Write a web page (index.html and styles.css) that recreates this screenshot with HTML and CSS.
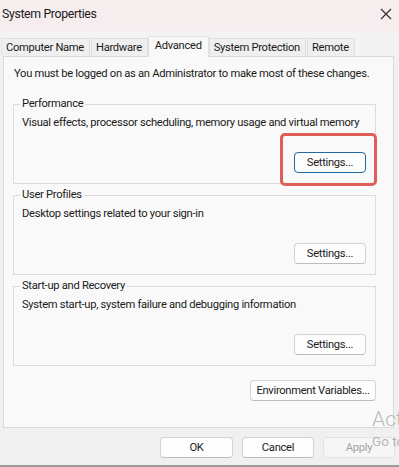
FILE: index.html
```html
<!DOCTYPE html>
<html>
<head>
<meta charset="utf-8">
<link rel="stylesheet" href="styles.css">
</head>
<body>
<div class="window">
  <div class="titlebar">
    <span class="title">System Properties</span>
    <svg class="close" width="12" height="12" viewBox="0 0 12 12"><path d="M1 1 L11 11 M11 1 L1 11" stroke="#2b2b2b" stroke-width="1.1" fill="none"/></svg>
  </div>
  <div class="tabs">
    <div class="tab">Computer Name</div>
    <div class="tab">Hardware</div>
    <div class="tab active">Advanced</div>
    <div class="tab">System Protection</div>
    <div class="tab">Remote</div>
  </div>
  <div class="panel">
    <p class="note">You must be logged on as an Administrator to make most of these changes.</p>
    <fieldset class="group">
      <legend>Performance</legend>
      <p class="desc">Visual effects, processor scheduling, memory usage and virtual memory</p>
      <div class="actions">
        <span class="btn-wrap"><button class="btn focus">Settings...</button><span class="highlight"></span></span>
      </div>
    </fieldset>
    <fieldset class="group">
      <legend>User Profiles</legend>
      <p class="desc">Desktop settings related to your sign-in</p>
      <div class="actions"><button class="btn">Settings...</button></div>
    </fieldset>
    <fieldset class="group">
      <legend>Start-up and Recovery</legend>
      <p class="desc">System start-up, system failure and debugging information</p>
      <div class="actions"><button class="btn">Settings...</button></div>
    </fieldset>
    <div class="env-row"><button class="btn env">Environment Variables...</button></div>
  </div>
  <div class="footer">
    <button class="btn">OK</button>
    <button class="btn">Cancel</button>
    <button class="btn disabled">Apply</button>
  </div>
  <div class="watermark">
    <div class="wm-big">Activate Windows</div>
    <div class="wm-small">Go to Settings to activate Windows.</div>
  </div>
</div>
</body>
</html>
```
FILE: styles.css
```css
* { box-sizing: border-box; }
html, body { margin: 0; padding: 0; }
body {
  width: 399px;
  height: 467px;
  overflow: hidden;
  background: #f0f0f0;
  font-family: Roboto, "Noto Sans", sans-serif;
  font-size: 11.2px;
  letter-spacing: -0.3px;
  color: #1a1a1a;
}
.window {
  position: relative;
  width: 399px;
  height: 467px;
  overflow: hidden;
  display: flex;
  flex-direction: column;
  border-bottom: 2px solid #9a9a9a;
}
.titlebar {
  height: 31px;
  background: #f6eeee;
  display: flex;
  align-items: center;
  justify-content: space-between;
  padding: 0 7px 3px 2px;
}
.title { font-size: 12.3px; letter-spacing: -0.35px; color: #1a1a1a; }
.close { display: block; margin-top: -1px; }
.tabs {
  display: flex;
  align-items: flex-end;
  height: 25px;
  padding-left: 1px;
  background: #f3f3f3;
}
.tab {
  height: 18px;
  line-height: 17px;
  padding: 0 5px 0 4px;
  border: 1px solid #e0e0e0;
  border-bottom: none;
  background: #efefef;
  margin-right: 1px;
  white-space: nowrap;
}
.tab.active {
  height: 21px;
  line-height: 17px;
  background: #f9f9f9;
  border-color: #e2e2e2;
  margin: 0 0 -1px -1px;
  position: relative;
  z-index: 1;
  padding: 0 6px;
}
.panel {
  width: 391px;
  height: 372px;
  margin-left: 3px;
  background: #f9f9f9;
  border: 1px solid #d9d9d9;
  padding: 10px 0 0 9px;
}
.note { margin: 0; line-height: 14px; padding-left: 1px; white-space: nowrap; }
.group {
  position: relative;
  width: 363px;
  margin: 16px 0 0 0;
  min-width: 0;
  border: 1px solid #dcdcdc;
  padding: 5px 9px 10px 8px;
}
.group + .group { margin-top: 4px; }
legend {
  padding: 0 2px;
  margin-left: -2px;
  line-height: 14px;
}
.desc { margin: 0; line-height: 14px; white-space: nowrap; }
.actions {
  display: flex;
  justify-content: flex-end;
  margin-top: 22px;
}
.btn-wrap { position: relative; display: block; }
.btn {
  display: block;
  width: 72px;
  height: 21px;
  padding: 0;
  font: inherit;
  letter-spacing: inherit;
  color: #1b1b1b;
  background: #fdfdfd;
  border: 1px solid #d3d3d3;
  border-bottom-color: #bdbdbd;
  border-radius: 4px;
  line-height: 18px;
}
.btn.focus { border: 1px solid #1f6aa0; }
.highlight {
  position: absolute;
  top: -19px; bottom: -13px; left: -14px; right: -11px;
  border: 3px solid #e05e59;
  border-radius: 5px;
  pointer-events: none;
}
.env-row {
  display: flex;
  justify-content: flex-end;
  width: 363px;
  margin-top: 14px;
}
.btn.env { width: 126px; }
.footer {
  flex: 1;
  display: flex;
  justify-content: flex-end;
  gap: 9px;
  padding: 9px 4px 0 0;
}
.footer .btn { width: 72px; }
.footer .btn:first-child { width: 73px; }
.btn.disabled {
  color: #a3a3a3;
  background: #f6f6f6;
  border-color: #e2e2e2;
}
.watermark {
  position: absolute;
  left: 372px;
  top: 406px;
  color: rgba(140,140,140,0.6);
  white-space: nowrap;
  letter-spacing: 0;
  pointer-events: none;
}
.wm-big { font-size: 21px; line-height: 27px; font-weight: 300; }
.wm-small { font-size: 13.5px; line-height: 16px; }
```
